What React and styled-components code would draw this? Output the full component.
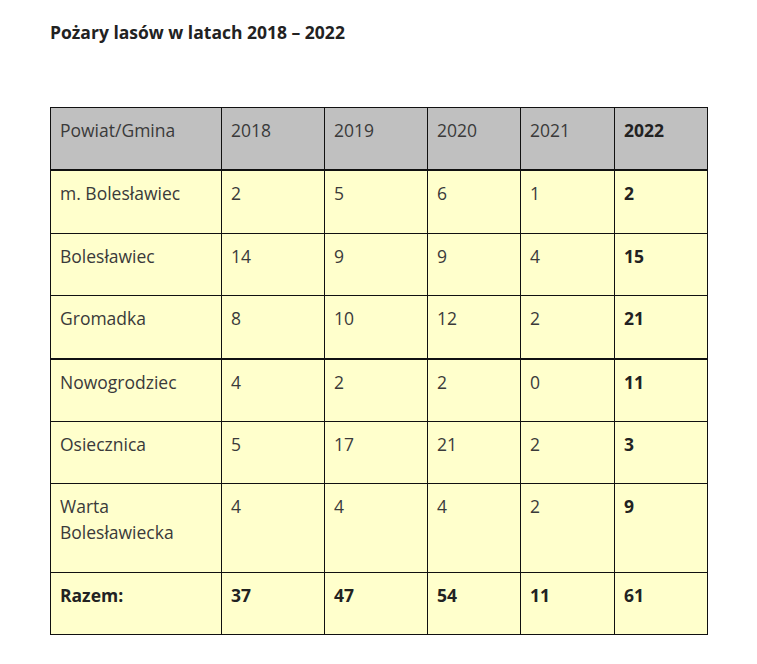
import React from 'react';
import styled, { createGlobalStyle } from 'styled-components';

const GlobalStyle = createGlobalStyle`
  html, body {
    margin: 0;
    padding: 0;
    background: #fff;
  }
  body {
    font-family: "Open Sans", "Liberation Sans", sans-serif;
    color: #333;
  }
`;

const Page = styled.div`
  padding: 19px 50px 0 50px;
  width: 657px;
`;

const Title = styled.h3`
  margin: 0 0 62px 0;
  font-size: 17.5px;
  line-height: 26px;
  font-weight: 700;
  color: #222;
`;

const Table = styled.table`
  border-collapse: collapse;
  table-layout: fixed;
  width: 657px;
`;

const Row = styled.tr`
  background: ${p => (p.$head ? '#c0c0c0' : '#ffffcc')};
  border-bottom: ${p => (p.$thick ? '2px' : '1px')} solid #111;
`;

const Cell = styled.td`
  border-left: 1px solid #111;
  border-right: 1px solid #111;
  border-top: 1px solid #111;
  padding: 9px 10px 26.4px 9px;
  vertical-align: top;
  font-size: 17.5px;
  line-height: 26px;
  font-weight: ${p => (p.$bold ? 700 : 400)};
  color: ${p => (p.$bold ? '#222' : '#3a3a3a')};
`;

const widths = [171, 103, 103, 93, 94, 93];

const header = ['Powiat/Gmina', '2018', '2019', '2020', '2021', '2022'];

const rows = [
  { name: 'm. Bolesławiec', v: ['2', '5', '6', '1', '2'] },
  { name: 'Bolesławiec', v: ['14', '9', '9', '4', '15'] },
  { name: 'Gromadka', v: ['8', '10', '12', '2', '21'], thick: true },
  { name: 'Nowogrodziec', v: ['4', '2', '2', '0', '11'] },
  { name: 'Osiecznica', v: ['5', '17', '21', '2', '3'] },
  { name: <>Warta<br />Bolesławiecka</>, v: ['4', '4', '4', '2', '9'] },
];

const total = ['Razem:', '37', '47', '54', '11', '61'];

export default function App() {
  return (
    <>
      <GlobalStyle />
      <Page>
        <Title>Pożary lasów w latach 2018 – 2022</Title>
        <Table>
          <colgroup>
            {widths.map((w, i) => (
              <col key={i} style={{ width: w }} />
            ))}
          </colgroup>
          <tbody>
            <Row $head $thick>
              {header.map((h, i) => (
                <Cell key={i} $bold={i === 5}>{h}</Cell>
              ))}
            </Row>
            {rows.map((r, i) => (
              <Row key={i} $thick={r.thick}>
                <Cell>{r.name}</Cell>
                {r.v.map((x, j) => (
                  <Cell key={j} $bold={j === 4}>{x}</Cell>
                ))}
              </Row>
            ))}
            <Row>
              {total.map((t, i) => (
                <Cell key={i} $bold>{t}</Cell>
              ))}
            </Row>
          </tbody>
        </Table>
      </Page>
    </>
  );
}
